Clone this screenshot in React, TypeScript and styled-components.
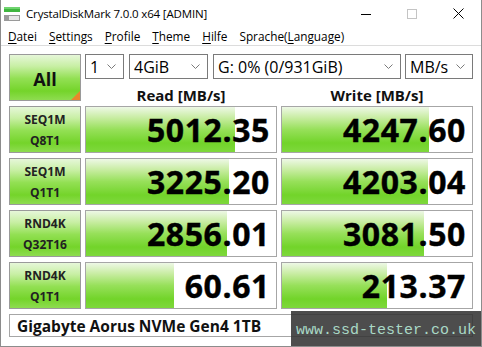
import styled, { createGlobalStyle } from "styled-components";

const GlobalStyle = createGlobalStyle`
  html, body {
    margin: 0;
    padding: 0;
    background: #ffffff;
  }
  body {
    font-family: "Open Sans", "Noto Sans", sans-serif;
    color: #000;
  }
`;

type Result = {
  label: [string, string];
  read: string;
  readFill: number;
  write: string;
  writeFill: number;
};

// fill widths are pixels of the 190px inner box
const results: Result[] = [
  { label: ["SEQ1M", "Q8T1"], read: "5012.35", readFill: 149, write: "4247.60", writeFill: 147 },
  { label: ["SEQ1M", "Q1T1"], read: "3225.20", readFill: 143, write: "4203.04", writeFill: 146 },
  { label: ["RND4K", "Q32T16"], read: "2856.01", readFill: 141, write: "3081.50", writeFill: 142 },
  { label: ["RND4K", "Q1T1"], read: "60.61", readFill: 88, write: "213.37", writeFill: 105 },
];

const menu = [
  { key: "D", rest: "atei" },
  { key: "S", rest: "ettings" },
  { key: "P", rest: "rofile" },
  { key: "T", rest: "heme" },
  { key: "H", rest: "ilfe" },
];

function Chevron() {
  return (
    <svg width="9" height="5" viewBox="0 0 9 5">
      <path d="M0.5 0.5 L4.5 4.5 L8.5 0.5" fill="none" stroke="#7a7a7a" strokeWidth="1" />
    </svg>
  );
}

function AppIcon() {
  return (
    <svg width="16" height="14" viewBox="0 0 16 14">
      <rect x="0" y="0" width="16" height="5" fill="#3fb53f" />
      <rect x="0" y="0" width="16" height="2" fill="#6fd46f" />
      <rect x="0" y="8" width="16" height="6" fill="#9a9a9a" />
      <rect x="5" y="9" width="10" height="4" fill="#e6e6e6" />
    </svg>
  );
}

export default function App() {
  return (
    <>
      <GlobalStyle />
      <Window>
        <TitleBar>
          <AppIcon />
          <Title>CrystalDiskMark 7.0.0 x64 [ADMIN]</Title>
          <Controls>
            <ControlButton>
              <svg width="10" height="10" viewBox="0 0 10 10">
                <line x1="0" y1="5.5" x2="10" y2="5.5" stroke="#000" strokeWidth="1" />
              </svg>
            </ControlButton>
            <ControlButton>
              <svg width="10" height="10" viewBox="0 0 10 10">
                <rect x="0.5" y="0.5" width="9" height="9" fill="none" stroke="#c4c4c4" strokeWidth="1" />
              </svg>
            </ControlButton>
            <ControlButton>
              <svg width="11" height="11" viewBox="0 0 11 11">
                <path d="M0.5 0.5 L10.5 10.5 M10.5 0.5 L0.5 10.5" stroke="#000" strokeWidth="1" />
              </svg>
            </ControlButton>
          </Controls>
        </TitleBar>
        <MenuBar>
          {menu.map((m) => (
            <MenuItem key={m.key}>
              <u>{m.key}</u>
              {m.rest}
            </MenuItem>
          ))}
          <MenuItem>
            Sprache(<u>L</u>anguage)
          </MenuItem>
        </MenuBar>
        <Content>
          <AllButton>All</AllButton>
          <ComboRow>
            <Combo $width={39}>
              <span>1</span>
              <Chevron />
            </Combo>
            <Combo $width={79}>
              <span>4GiB</span>
              <Chevron />
            </Combo>
            <Combo $width={188}>
              <span>G: 0% (0/931GiB)</span>
              <Chevron />
            </Combo>
            <Combo $width={68}>
              <span>MB/s</span>
              <Chevron />
            </Combo>
          </ComboRow>
          <Header>Read [MB/s]</Header>
          <Header>Write [MB/s]</Header>
          {results.map((r) => (
            <Row key={r.label.join("-")}>
              <TestButton>
                <span>{r.label[0]}</span>
                <span>{r.label[1]}</span>
              </TestButton>
              <ValueBox>
                <Fill style={{ width: r.readFill }} />
                <Value>{r.read}</Value>
              </ValueBox>
              <ValueBox>
                <Fill style={{ width: r.writeFill }} />
                <Value>{r.write}</Value>
              </ValueBox>
            </Row>
          ))}
          <DriveBar>Gigabyte Aorus NVMe Gen4 1TB</DriveBar>
        </Content>
        <Watermark>www.ssd-tester.co.uk</Watermark>
      </Window>
    </>
  );
}

const Window = styled.div`
  width: 482px;
  height: 347px;
  box-sizing: border-box;
  border: 1px solid #8c8c8c;
  border-top: none;
  background: #ffffff;
  position: relative;
  overflow: hidden;
  display: flex;
  flex-direction: column;
`;

const TitleBar = styled.div`
  height: 27px;
  display: flex;
  align-items: center;
  padding-left: 3px;
  gap: 6px;
`;

const Title = styled.span`
  font-size: 11.5px;
  letter-spacing: -0.15px;
  color: #000;
`;

const Controls = styled.div`
  margin-left: auto;
  display: flex;
  height: 100%;
`;

const ControlButton = styled.div`
  width: 46px;
  height: 100%;
  display: flex;
  align-items: center;
  justify-content: center;
`;

const MenuBar = styled.div`
  height: 18px;
  display: flex;
  align-items: center;
  padding-left: 1px;
  border-bottom: 1px solid #dcdcdc;
`;

const MenuItem = styled.span`
  font-size: 11.8px;
  padding: 0 6px;
  u {
    text-decoration-thickness: 1px;
    text-underline-offset: 2px;
  }
`;

const Content = styled.div`
  padding: 8px 7px 0 8px;
  display: grid;
  grid-template-columns: 72px 192px 192px;
  grid-template-rows: 25px 17px repeat(4, 47px) 23px;
  column-gap: 4px;
  row-gap: 5px;
`;

const greenButton = `
  border: 1px solid #9a9a9a;
  box-sizing: border-box;
  background: linear-gradient(
    to bottom,
    #e6f7d9 0%,
    #c8efa4 25%,
    #93e054 52%,
    #74d42a 80%,
    #8edc50 100%
  );
`;

const AllButton = styled.div`
  ${greenButton}
  grid-row: 1 / span 2;
  position: relative;
  display: flex;
  align-items: center;
  justify-content: center;
  padding-top: 2px;
  font-size: 18px;
  font-weight: 700;
  color: #111;
  &::after {
    content: "";
    position: absolute;
    right: 0;
    bottom: 0;
    border-style: solid;
    border-width: 0 0 9px 9px;
    border-color: transparent transparent #e8862c transparent;
  }
`;

const ComboRow = styled.div`
  grid-column: 2 / span 2;
  display: flex;
  gap: 5px;
  & > div:last-child {
    margin-left: -1px;
  }
`;

const Combo = styled.div<{ $width: number }>`
  width: ${(p) => p.$width}px;
  box-sizing: border-box;
  border: 1px solid #7a7a7a;
  background: #fff;
  display: flex;
  align-items: center;
  justify-content: space-between;
  padding: 0 7px 0 4px;
  font-size: 16px;
  color: #000;
`;

const Header = styled.div`
  font-size: 15px;
  font-weight: 700;
  text-align: center;
  line-height: 17px;
  padding-top: 3px;
  color: #111;
`;

const Row = styled.div`
  display: contents;
`;

const TestButton = styled.div`
  ${greenButton}
  display: flex;
  flex-direction: column;
  align-items: center;
  justify-content: center;
  font-size: 12px;
  font-weight: 700;
  line-height: 21px;
  color: #222;
`;

const ValueBox = styled.div`
  position: relative;
  box-sizing: border-box;
  border: 1px solid #a6a6a6;
  background: #fff;
  display: flex;
  align-items: center;
  justify-content: flex-end;
  padding-right: 6px;
`;

const Fill = styled.div`
  position: absolute;
  left: 0;
  top: 0;
  bottom: 0;
  background: linear-gradient(
    to bottom,
    #eef8e6 0%,
    #c6ec9f 25%,
    #97e05a 50%,
    #72d42a 80%,
    #7ed83c 100%
  );
`;

const Value = styled.span`
  position: relative;
  font-size: 32px;
  font-weight: 700;
  letter-spacing: 0.6px;
  line-height: 1;
  color: #000;
  -webkit-text-stroke: 0.4px #000;
`;

const DriveBar = styled.div`
  grid-column: 1 / -1;
  box-sizing: border-box;
  border: 1px solid #a6a6a6;
  display: flex;
  align-items: center;
  padding-left: 7px;
  font-size: 15.5px;
  font-weight: 700;
  color: #111;
`;

const Watermark = styled.div`
  position: absolute;
  right: 0;
  bottom: 0;
  width: 190px;
  height: 35px;
  box-sizing: border-box;
  background: rgba(52, 52, 52, 0.88);
  display: flex;
  align-items: center;
  padding: 4px 0 0 5px;
  font-family: "Liberation Mono", "DejaVu Sans Mono", monospace;
  font-size: 15px;
  color: #a9d9c6;
`;
